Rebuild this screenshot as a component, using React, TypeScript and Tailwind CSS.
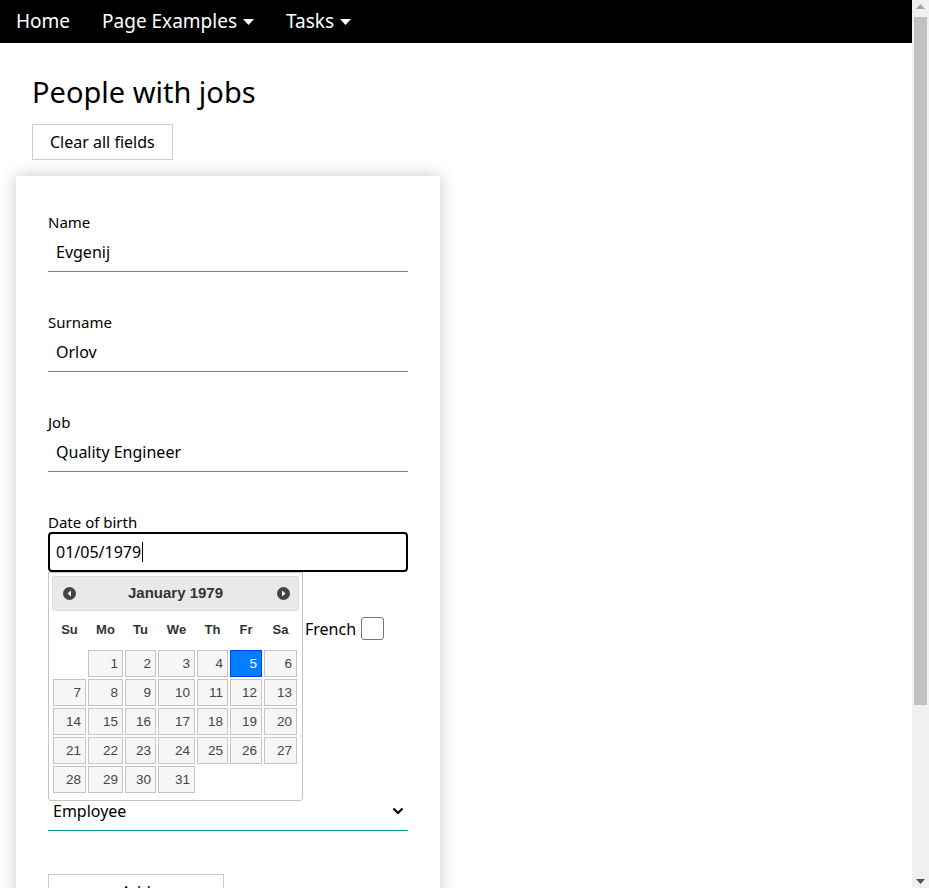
import React from 'react';

const weekDays = ['Su', 'Mo', 'Tu', 'We', 'Th', 'Fr', 'Sa'];
const days = Array.from({ length: 31 }, (_, i) => i + 1);

const Caret: React.FC = () => (
  <svg width="11" height="6" viewBox="0 0 11 6" className="ml-[6px]">
    <path d="M0 0h11L5.5 6z" fill="white" />
  </svg>
);

const NavBar: React.FC = () => (
  <nav className="flex h-[43px] items-center bg-black text-[19px] text-white">
    <a className="px-4">Home</a>
    <a className="flex items-center px-4">
      Page Examples
      <Caret />
    </a>
    <a className="flex items-center px-4">
      Tasks
      <Caret />
    </a>
  </nav>
);

const TextField: React.FC<{ label: string; value: string }> = ({ label, value }) => (
  <div className="mb-[40px]">
    <div className="h-[20px] text-[15px] leading-[20px]">{label}</div>
    <input
      readOnly
      value={value}
      className="block h-[40px] w-full border-b border-[#808080] px-2 text-[16px] outline-none"
    />
  </div>
);

const NavCircle: React.FC<{ dir: 'prev' | 'next' }> = ({ dir }) => (
  <svg width="13" height="13" viewBox="0 0 13 13">
    <circle cx="6.5" cy="6.5" r="6.5" fill="#444444" />
    {dir === 'prev' ? (
      <path d="M4.5 6.5L8 3.5v6z" fill="white" />
    ) : (
      <path d="M8.5 6.5L5 3.5v6z" fill="white" />
    )}
  </svg>
);

const DatePicker: React.FC = () => (
  <div className="absolute left-0 top-full z-10 h-[229px] w-[255px] rounded-b-[3px] border border-[#c5c5c5] bg-white p-[3px] font-['Liberation_Sans',Arial,sans-serif]">
    <div className="relative flex h-[35px] items-center justify-center rounded-[3px] border border-[#dddddd] bg-[#e9e9e9] text-[15px] font-bold text-[#333333]">
      <span className="absolute left-[10px] top-[10px]">
        <NavCircle dir="prev" />
      </span>
      January 1979
      <span className="absolute right-[8px] top-[10px]">
        <NavCircle dir="next" />
      </span>
    </div>
    <div className="ml-[1px] grid grid-cols-[33px_35px_31px_37px_31px_32px_33px] gap-x-[2px]">
      {weekDays.map(d => (
        <div key={d} className="flex h-[38px] items-center justify-center text-[13px] font-bold text-[#333333]">
          {d}
        </div>
      ))}
    </div>
    <div className="ml-[1px] mt-[1px] grid grid-cols-[33px_35px_31px_37px_31px_32px_33px] gap-[2px]">
      {days.map(d => (
        <div
          key={d}
          className={
            'h-[27px] border pr-[4px] text-right text-[13.5px] leading-[25px] ' +
            (d === 1 ? 'col-start-2 ' : '') +
            (d === 5
              ? 'border-[#003eff] bg-[#007fff] text-white'
              : 'border-[#c5c5c5] bg-[#f6f6f6] text-[#454545]')
          }
        >
          {d}
        </div>
      ))}
    </div>
  </div>
);

const Box: React.FC = () => (
  <span className="block h-[23px] w-[23px] rounded-[3px] border border-[#767676] bg-white" />
);

const Scrollbar: React.FC = () => (
  <div className="flex w-[17px] flex-col items-center bg-[#f0f0f0]">
    <svg width="9" height="5" viewBox="0 0 9 5" className="mt-[4px]">
      <path d="M0 5L4.5 0L9 5z" fill="#a3a3a3" />
    </svg>
    <div className="mt-[8px] h-[688px] w-[13px] bg-[#c1c1c1]" />
    <div className="flex-1" />
    <svg width="9" height="5" viewBox="0 0 9 5" className="mb-[4px]">
      <path d="M0 0L4.5 5L9 0z" fill="#505050" />
    </svg>
  </div>
);

const App: React.FC = () => {
  return (
    <div className="flex h-[888px] overflow-hidden bg-white font-['Noto_Sans',sans-serif] text-black">
      <div className="flex-1">
        <NavBar />
        <div className="px-8 pt-[31px]">
          <h1 className="text-[29px] leading-[36px]">People with jobs</h1>
          <button className="mt-[14px] h-[36px] border border-[#cccccc] px-[17px] text-[16px]">
            Clear all fields
          </button>
        </div>
        <div className="ml-4 mt-[16px] h-[760px] w-[424px] bg-white px-8 pt-[36px] shadow-[0_0_16px_rgba(0,0,0,0.22)]">
          <TextField label="Name" value="Evgenij" />
          <TextField label="Surname" value="Orlov" />
          <TextField label="Job" value="Quality Engineer" />

          <div>
            <div className="h-[20px] text-[15px] leading-[20px]">Date of birth</div>
            <div className="relative">
              <div className="flex h-[40px] items-center rounded-[4px] border-2 border-black px-[6px] text-[16px]">
                01/05/1979
                <span className="ml-[1px] h-[20px] w-px bg-black" />
              </div>
              <DatePicker />
            </div>
          </div>

          <div className="mt-[45px] flex h-[23px] items-center">
            <span className="ml-[232px]">
              <Box />
            </span>
            <label className="ml-[2px] flex items-center">
              <span className="text-[16px]">French</span>
              <span className="ml-[5px]">
                <Box />
              </span>
            </label>
          </div>

          <div className="mt-[151px] flex h-[40px] items-center justify-between border-b border-[#009688] pl-[5px] pr-[4px] text-[16px]">
            <span>Employee</span>
            <svg width="12" height="8" viewBox="0 0 12 8">
              <path d="M1.5 1.5L6 6l4.5-4.5" fill="none" stroke="black" strokeWidth="2.2" />
            </svg>
          </div>

          <button className="mt-[43px] h-[36px] w-[176px] border border-[#cccccc] text-[16px]">Add</button>
        </div>
      </div>
      <Scrollbar />
    </div>
  );
};

export default App;
